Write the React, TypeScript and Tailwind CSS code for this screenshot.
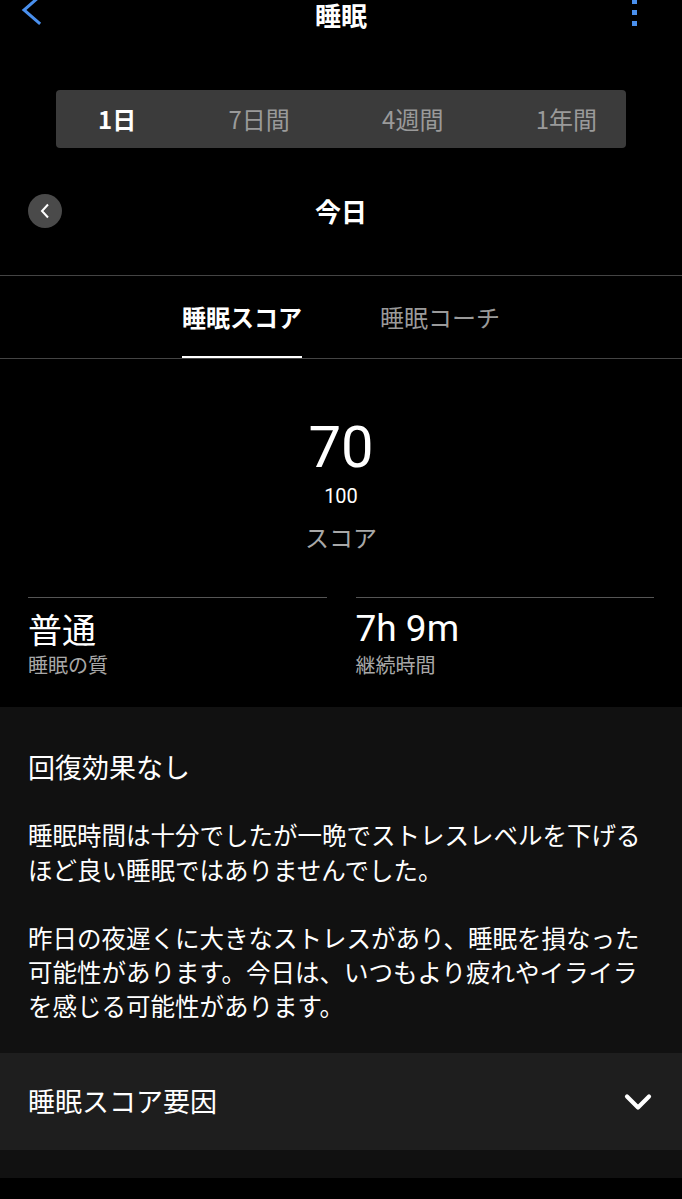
import { ChevronDown } from 'lucide-react'

const font = { fontFamily: '"Noto Sans CJK JP", "Noto Sans", sans-serif' }

const periods = ['1日', '7日間', '4週間', '1年間']

function BackChevron() {
    return (
        <svg width="22" height="30" viewBox="0 0 22 30" className="-mt-[4px]">
            <path d="M19 1 L4 14 L19 27" fill="none" stroke="#4a90ee" strokeWidth="3" strokeLinecap="square" />
        </svg>
    )
}

function MoreDots() {
    return (
        <div className="flex flex-col gap-[6px] -mt-[2px]">
            <span className="block w-[5px] h-[5px] bg-[#4a90ee]" />
            <span className="block w-[5px] h-[5px] bg-[#4a90ee]" />
            <span className="block w-[5px] h-[5px] bg-[#4a90ee]" />
        </div>
    )
}

export default function App() {
    return (
        <div className="w-[682px] h-[1199px] bg-black text-white overflow-hidden" style={font}>
            {/* top bar */}
            <div className="h-[30px] flex items-center justify-between pl-[20px] pr-[45px]">
                <div className="w-[30px] -mt-[4px]"><BackChevron /></div>
                <div className="text-[26px] font-bold leading-[30px]">睡眠</div>
                <div className="w-[5px] -mt-[4px]"><MoreDots /></div>
            </div>

            {/* period picker */}
            <div className="mx-[56px] mt-[60px] h-[58px] rounded-[4px] bg-[#3b3b3b] flex items-center justify-between pl-[42px] pr-[29px]">
                {periods.map((p, i) => (
                    <div
                        key={p}
                        className={
                            i === 0
                                ? 'text-[24px] font-bold text-white'
                                : 'text-[24px] text-[#9a9a9a]'
                        }
                    >
                        {p}
                    </div>
                ))}
            </div>

            {/* date row */}
            <div className="mt-[46px] px-[28px] grid grid-cols-[34px_1fr_34px] items-center h-[34px]">
                <div className="w-[34px] h-[34px] rounded-full bg-[#4a4a4a] flex items-center justify-center">
                    <svg width="10" height="16" viewBox="0 0 10 16">
                        <path d="M8 1.5 L2 8 L8 14.5" fill="none" stroke="white" strokeWidth="2" />
                    </svg>
                </div>
                <div className="text-center text-[26px] font-bold leading-none">今日</div>
                <div />
            </div>

            {/* tabs */}
            <div className="mt-[47px] border-t border-[#444] border-b flex justify-center gap-[78px] h-[84px]">
                <div className="flex flex-col justify-between">
                    <div className="mt-[25px] text-[24px] font-bold leading-[32px]">睡眠スコア</div>
                    <div className="h-[2px] bg-white" />
                </div>
                <div className="flex flex-col">
                    <div className="mt-[25px] text-[24px] leading-[32px] text-[#9a9a9a]">睡眠コーチ</div>
                </div>
            </div>

            {/* score */}
            <div className="flex flex-col items-center mt-[56px]">
                <div className="text-[58px] leading-[64px]" style={{ fontFamily: 'Roboto, sans-serif' }}>70</div>
                <div className="text-[20px] leading-[28px] mt-[3px]" style={{ fontFamily: 'Roboto, sans-serif' }}>100</div>
                <div className="text-[24px] leading-[32px] mt-[11px] text-[#a8a8a8]">スコア</div>
            </div>

            {/* stats */}
            <div className="mt-[44px] px-[28px] grid grid-cols-2 gap-[29px]">
                <div className="border-t border-[#555] pt-[9px]">
                    <div className="text-[34px] leading-[44px]">普通</div>
                    <div className="text-[20px] leading-[28px] text-[#a8a8a8]">睡眠の質</div>
                </div>
                <div className="border-t border-[#555] pt-[9px]">
                    <div className="text-[37px] leading-[44px]" style={{ fontFamily: 'Roboto, sans-serif' }}>7h 9m</div>
                    <div className="text-[20px] leading-[28px] text-[#a8a8a8]">継続時間</div>
                </div>
            </div>

            {/* insight card */}
            <div className="mt-[28px] bg-[#111111] px-[28px] pt-[42px] h-[346px]">
                <div className="text-[27px] leading-[36px]">回復効果なし</div>
                <p className="mt-[32px] text-[24.5px] leading-[35px]">
                    睡眠時間は十分でしたが一晩でストレスレベルを下げる<br />
                    ほど良い睡眠ではありませんでした。
                </p>
                <p className="mt-[34px] text-[24.5px] leading-[34px]">
                    昨日の夜遅くに大きなストレスがあり、睡眠を損なった<br />
                    可能性があります。今日は、いつもより疲れやイライラ<br />
                    を感じる可能性があります。
                </p>
            </div>

            {/* score factors */}
            <div className="bg-[#1e1e1e] h-[97px] px-[28px] flex items-center justify-between">
                <div className="text-[27px]">睡眠スコア要因</div>
                <ChevronDown size={44} strokeWidth={2.3} className="text-white -mr-[6px]" />
            </div>
            <div className="bg-[#111111] h-[28px]" />
        </div>
    )
}
